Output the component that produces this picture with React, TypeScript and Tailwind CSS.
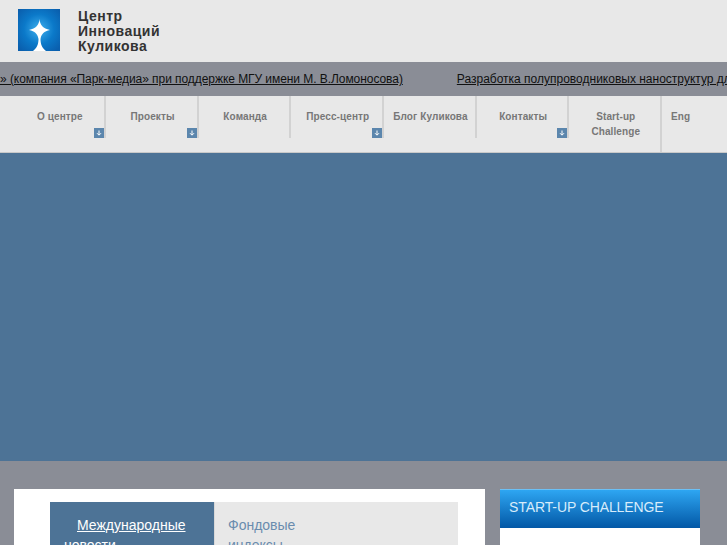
const navItems = [
  { label: 'О центре', arrow: true },
  { label: 'Проекты', arrow: true },
  { label: 'Команда', arrow: false },
  { label: 'Пресс-центр', arrow: true },
  { label: 'Блог Куликова', arrow: false },
  { label: 'Контакты', arrow: true },
];

function Logo() {
  return (
    <svg width="42" height="42" viewBox="0 0 42 42" className="mb-[2px] block">
      <defs>
        <radialGradient id="logoBg" cx="50%" cy="48%" r="65%">
          <stop offset="0%" stopColor="#3fb0ee" />
          <stop offset="55%" stopColor="#0b79c9" />
          <stop offset="100%" stopColor="#0a5fae" />
        </radialGradient>
      </defs>
      <rect width="42" height="42" fill="url(#logoBg)" />
      <path
        d="M21.5 10C22 16 25 19.5 32 21C26 22.5 23.5 24.5 22.5 30C22.5 35 24 39 28 42H15C19 39 20.5 35 20.5 30C19.5 24.5 17 22.5 11 21C18 19.5 21 16 21.5 10Z"
        fill="#ffffff"
      />
    </svg>
  );
}

function ArrowBadge() {
  return (
    <span className="absolute right-0 bottom-0 flex h-[10px] w-[10px] items-center justify-center bg-[#5b86ad]">
      <svg width="6" height="6" viewBox="0 0 6 6">
        <path d="M3 0.5V5M1 3.2L3 5.2L5 3.2" fill="none" stroke="#ffffff" strokeWidth="1" />
      </svg>
    </span>
  );
}

export default function App() {
  return (
    <div className="h-[545px] w-[727px] overflow-hidden bg-[#8a8d96] font-['Liberation_Sans',sans-serif]">
      <header className="flex h-[62px] items-center bg-[#e8e8e8] pl-[18px]">
        <Logo />
        <div className="ml-[18px] text-[14px] leading-[15px] font-bold tracking-[0.5px] text-[#333333]">
          <div>Центр</div>
          <div>Инноваций</div>
          <div>Куликова</div>
        </div>
      </header>

      <div className="flex h-[34px] items-center overflow-hidden whitespace-nowrap text-[12px] text-[#111111]">
        <a className="tracking-[-0.06px] underline">» (компания «Парк-медиа» при поддержке МГУ имени М. В.Ломоносова)</a>
        <a className="ml-[54px] underline">Разработка полупроводниковых наноструктур для оптоэлектроники</a>
      </div>

      <nav className="flex h-[57px] border-b border-[#c9c9c9] bg-[#e8e8e8] pl-[13.5px] text-[10px] font-bold tracking-[0.1px] text-[#777777]">
        {navItems.map((item) => (
          <div
            key={item.label}
            className="relative h-[42px] w-[92.67px] border-r-2 border-[#d2d2d2] pt-[14px] pl-[2px] text-center leading-[13px]"
          >
            {item.label}
            {item.arrow && <ArrowBadge />}
          </div>
        ))}
        <div className="h-full w-[92.67px] border-r-2 border-[#d2d2d2] pt-[13px] pl-[2px] text-center leading-[15px]">
          Start-up
          <br />
          Challenge
        </div>
        <div className="pt-[14px] pl-[9px] leading-[13px]">Eng</div>
      </nav>

      <div className="h-[308px] bg-[#4d7396]" />

      <main className="flex items-start pt-[28px] pl-[14px]">
        <section className="flex h-[60px] w-[471px] bg-white pt-[13px] pl-[36px] text-[14px] leading-[20px]">
          <div className="h-full w-[165px] border-r border-[#d8d8d8] bg-[#4d7396] pt-[13px] pl-[14px] text-white">
            <a className="ml-[13px] underline">Международные</a>
            <div>новости</div>
          </div>
          <div className="h-full w-[243px] bg-[#e8e8e8] pt-[13px] pl-[13px] text-[#6a8cae]">
            <div>Фондовые</div>
            <div>индексы</div>
          </div>
        </section>
        <aside className="ml-[15px] w-[200px]">
          <div className="flex h-[39px] items-center border-t border-[#6cc0f5] bg-gradient-to-b from-[#2ea6f2] to-[#0358a6] pb-[3px] pl-[9px] text-[14px] tracking-[-0.1px] text-[#d7ecfb]">
            START-UP CHALLENGE
          </div>
          <div className="h-[30px] bg-white" />
        </aside>
      </main>
    </div>
  );
}
